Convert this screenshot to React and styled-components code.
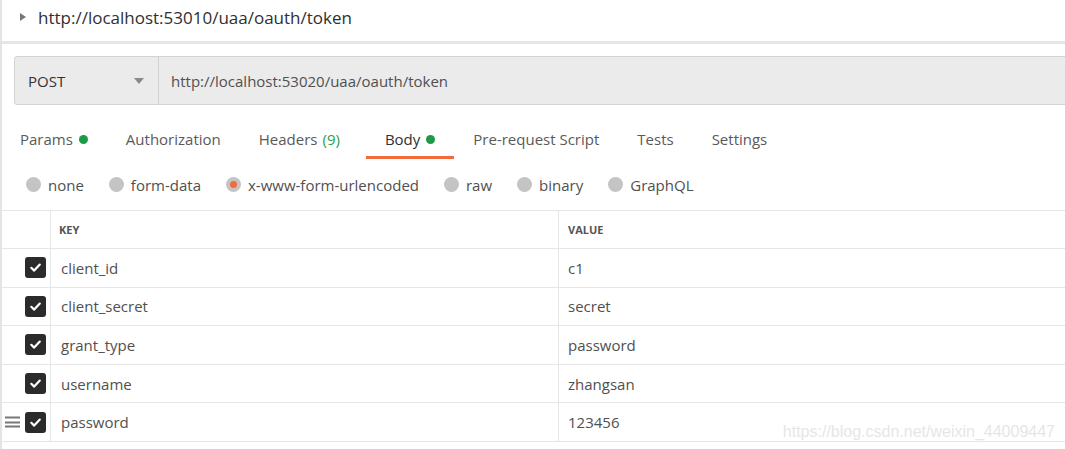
import React from 'react'
import styled, { createGlobalStyle } from 'styled-components'

const GlobalStyle = createGlobalStyle`
  html, body { margin: 0; padding: 0; background: #fff; }
  body { font-family: "Open Sans", "Noto Sans", sans-serif; }
`

const params = [
  { key: 'client_id', value: 'c1' },
  { key: 'client_secret', value: 'secret' },
  { key: 'grant_type', value: 'password' },
  { key: 'username', value: 'zhangsan' },
  { key: 'password', value: '123456', handle: true },
]

const tabs = [
  { label: 'Params', dot: true },
  { label: 'Authorization' },
  { label: 'Headers', count: '(9)' },
  { label: 'Body', dot: true, active: true },
  { label: 'Pre-request Script' },
  { label: 'Tests' },
  { label: 'Settings' },
]

const modes = ['none', 'form-data', 'x-www-form-urlencoded', 'raw', 'binary', 'GraphQL']

const App = () => {
  return (
    <StyledPage>
      <GlobalStyle />
      <Header>
        <Caret />
        <HeaderTitle>http://localhost:53010/uaa/oauth/token</HeaderTitle>
      </Header>

      <RequestBar>
        <MethodSelect>
          <span>POST</span>
          <DownCaret />
        </MethodSelect>
        <UrlText>http://localhost:53020/uaa/oauth/token</UrlText>
      </RequestBar>

      <TabRow>
        {tabs.map((t) => (
          <Tab key={t.label} active={t.active}>
            {t.label}
            {t.count && <Count>{t.count}</Count>}
            {t.dot && <Dot />}
          </Tab>
        ))}
      </TabRow>

      <RadioRow>
        {modes.map((m) => (
          <RadioItem key={m}>
            <Radio checked={m === 'x-www-form-urlencoded'} />
            {m}
          </RadioItem>
        ))}
      </RadioRow>

      <Table>
        <Row head>
          <CheckCell />
          <KeyCell head>KEY</KeyCell>
          <ValueCell head>VALUE</ValueCell>
        </Row>
        {params.map((p) => (
          <Row key={p.key}>
            <CheckCell>
              {p.handle && <Handle><i /><i /><i /></Handle>}
              <Checkbox>
                <svg width="13" height="13" viewBox="0 0 13 13">
                  <path d="M2.3 6.8 L5.2 9.6 L10.8 3.6" fill="none" stroke="#fff" strokeWidth="2.2" strokeLinecap="round" strokeLinejoin="round" />
                </svg>
              </Checkbox>
            </CheckCell>
            <KeyCell>{p.key}</KeyCell>
            <ValueCell>{p.value}</ValueCell>
          </Row>
        ))}
      </Table>

      <Watermark>https://blog.csdn.net/weixin_44009447</Watermark>
    </StyledPage>
  )
}
export default App

const StyledPage = styled.div`
  position: relative;
  width: 1065px;
  height: 449px;
  overflow: hidden;
  border-left: 2px solid #e4e4e4;
  box-sizing: border-box;
`

const Header = styled.div`
  height: 41px;
  display: flex;
  align-items: center;
  padding-left: 18px;
  border-bottom: 3px solid #e6e6e6;
`

const Caret = styled.span`
  width: 0;
  height: 0;
  border-top: 4px solid transparent;
  border-bottom: 4px solid transparent;
  border-left: 6px solid #777;
  margin-right: 12px;
  margin-top: -7px;
`

const HeaderTitle = styled.span`
  font-size: 17px;
  color: #303030;
  margin-top: -7px;
`

const RequestBar = styled.div`
  margin: 12px 0 0 12px;
  width: 1100px;
  height: 49px;
  box-sizing: border-box;
  display: flex;
  background: #ebebeb;
  border: 1px solid #d3d3d3;
  border-radius: 3px;
`

const MethodSelect = styled.div`
  width: 144px;
  box-sizing: border-box;
  display: flex;
  align-items: center;
  justify-content: space-between;
  padding: 0 14px 0 13px;
  border-right: 1px solid #d3d3d3;
  font-size: 15px;
  color: #333;
`

const DownCaret = styled.span`
  width: 0;
  height: 0;
  border-left: 5px solid transparent;
  border-right: 5px solid transparent;
  border-top: 6px solid #8a8a8a;
`

const UrlText = styled.div`
  display: flex;
  align-items: center;
  padding-left: 12px;
  font-size: 15px;
  color: #505050;
`

const TabRow = styled.div`
  display: flex;
  margin-top: 18px;
  margin-left: -1px;
`

const Tab = styled.div`
  display: flex;
  align-items: center;
  padding: 6px 19px 6px;
  line-height: 21px;
  font-size: 15px;
  color: ${(p) => (p.active ? '#303030' : '#5a5a5a')};
  border-bottom: 3px solid ${(p) => (p.active ? '#f26b3a' : 'transparent')};
`

const Count = styled.span`
  color: #26a04c;
  margin-left: 5px;
  margin-right: 7px;
`

const Dot = styled.span`
  width: 9px;
  height: 9px;
  border-radius: 50%;
  background: #1e9a47;
  margin-left: 6px;
`

const RadioRow = styled.div`
  height: 51px;
  display: flex;
  align-items: center;
  gap: 25px;
  padding-left: 24px;
`

const RadioItem = styled.div`
  display: flex;
  align-items: center;
  gap: 7px;
  font-size: 15px;
  color: #505050;
`

const Radio = styled.span`
  width: 15px;
  height: 15px;
  border-radius: 50%;
  background: #c4c4c4;
  display: flex;
  align-items: center;
  justify-content: center;
  &::after {
    content: '';
    width: 7px;
    height: 7px;
    border-radius: 50%;
    background: ${(p) => (p.checked ? '#f26b3a' : 'transparent')};
  }
`

const Table = styled.div`
  border-top: 1px solid #e6e6e6;
  width: 1100px;
`

const Row = styled.div`
  display: grid;
  grid-template-columns: 49px 508px 1fr;
  height: ${(p) => (p.head ? '38px' : '38.6px')};
  box-sizing: border-box;
  border-bottom: 1px solid #e6e6e6;
`

const CheckCell = styled.div`
  position: relative;
  display: flex;
  align-items: center;
  justify-content: flex-end;
  padding-right: 4px;
  border-right: 1px solid #e6e6e6;
`

const Handle = styled.span`
  position: absolute;
  left: 3px;
  top: 50%;
  transform: translateY(-50%);
  display: flex;
  flex-direction: column;
  gap: 2.5px;
  i {
    display: block;
    width: 15px;
    height: 2px;
    background: #777;
  }
`

const Checkbox = styled.span`
  width: 21px;
  height: 21px;
  border-radius: 3px;
  background: #2b2b2b;
  display: flex;
  align-items: center;
  justify-content: center;
`

const KeyCell = styled.div`
  display: flex;
  align-items: center;
  padding-left: ${(p) => (p.head ? '8px' : '10px')};
  border-right: 1px solid #e6e6e6;
  font-size: ${(p) => (p.head ? '11px' : '15px')};
  font-weight: ${(p) => (p.head ? 700 : 400)};
  color: ${(p) => (p.head ? '#555' : '#505050')};
`

const ValueCell = styled.div`
  display: flex;
  align-items: center;
  padding-left: 9px;
  font-size: ${(p) => (p.head ? '11px' : '15px')};
  font-weight: ${(p) => (p.head ? 700 : 400)};
  color: ${(p) => (p.head ? '#555' : '#505050')};
`

const Watermark = styled.div`
  position: absolute;
  right: 10px;
  bottom: 8px;
  font-family: "Liberation Sans", Arial, sans-serif;
  font-size: 16px;
  color: #e6e6e6;
`
